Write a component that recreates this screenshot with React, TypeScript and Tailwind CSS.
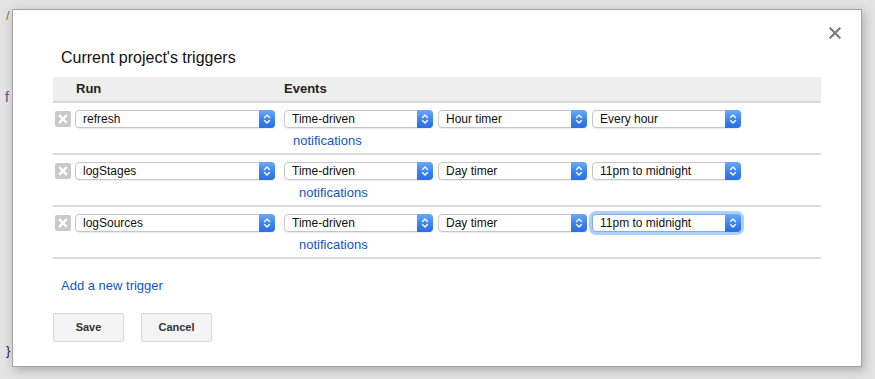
import clsx from 'clsx';

type Trigger = {
  fn: string;
  events: [string, string, string];
  notifyOffset: string;
  focusLast?: boolean;
};

const triggers: Trigger[] = [
  { fn: 'refresh', events: ['Time-driven', 'Hour timer', 'Every hour'], notifyOffset: 'pl-[9px]' },
  { fn: 'logStages', events: ['Time-driven', 'Day timer', '11pm to midnight'], notifyOffset: 'pl-[15px]' },
  { fn: 'logSources', events: ['Time-driven', 'Day timer', '11pm to midnight'], notifyOffset: 'pl-[15px]', focusLast: true },
];

const font = 'font-["Liberation_Sans",Arial,sans-serif]';

const Select = ({ value, className, focused }: { value: string; className: string; focused?: boolean }) => (
  <div
    className={clsx(
      'flex h-[18px] items-stretch rounded-[4px] border bg-white',
      focused
        ? 'border-[#7eaef0] shadow-[0_0_0_3px_rgba(110,165,245,0.55)]'
        : 'border-[#c6c6c6] shadow-[0_1px_0_rgba(0,0,0,0.06)]',
      className,
    )}
  >
    <div className="flex flex-1 items-center truncate pl-[7px] text-[12px] leading-none text-[#111]">{value}</div>
    <div className="-my-px -mr-px flex w-[16px] items-center justify-center rounded-r-[4px] bg-[linear-gradient(180deg,#6aa9fb_0%,#3a82f0_55%,#2a6fe3_100%)]">
      <svg width="8" height="12" viewBox="0 0 8 12" fill="none" stroke="white" strokeWidth="1.4" strokeLinecap="round" strokeLinejoin="round">
        <path d="M1.5 4.5 L4 2 L6.5 4.5" />
        <path d="M1.5 7.5 L4 10 L6.5 7.5" />
      </svg>
    </div>
  </div>
);

const DeleteIcon = () => (
  <div className="mt-px flex h-[16px] w-[16px] items-center justify-center rounded-[2px] bg-[#c9c9c9]">
    <svg width="10" height="10" viewBox="0 0 10 10" stroke="white" strokeWidth="2.4" strokeLinecap="square">
      <path d="M2 2 L8 8 M8 2 L2 8" />
    </svg>
  </div>
);

export default function App() {
  return (
    <div className={clsx('relative h-[379px] w-[875px] overflow-hidden bg-[#e3e3e3]', font)}>
      {/* editor behind the dialog */}
      <div className="absolute left-[6px] top-[6px] text-[13px] text-[#a86a2c]">/</div>
      <div className="absolute left-[5px] top-[87px] text-[14px] text-[#7b3f9e]">f</div>
      <div className="absolute left-[6px] top-[341px] text-[13px] text-[#222]">{'}'}</div>

      <div className="absolute left-[12px] top-[9px] flex h-[358px] w-[850px] flex-col border border-[#a3a3a3] bg-white pl-[40px] pr-[40px] shadow-[2px_3px_10px_rgba(0,0,0,0.25)]">
        <button className="absolute right-[20px] top-[17px] p-0">
          <svg width="12" height="12" viewBox="0 0 12 12" stroke="#7a7a7a" strokeWidth="2.2" strokeLinecap="square">
            <path d="M1.5 1.5 L10.5 10.5 M10.5 1.5 L1.5 10.5" />
          </svg>
        </button>

        <div className="mt-[39px] pl-[8px] text-[16px] leading-[18px] text-[#111]">Current project's triggers</div>

        <div className="mt-[10px] w-[768px]">
          <div className="flex h-[26px] items-center border-b-2 border-[#d9d9d9] bg-[#eeeeee] text-[13px] font-bold text-[#222]">
            <div className="w-[231px] pl-[23px]">Run</div>
            <div>Events</div>
          </div>
          {triggers.map((t) => (
            <div key={t.fn} className="flex h-[52px] items-start border-b-2 border-[#d9d9d9] pl-[2px] pt-[7px]">
              <DeleteIcon />
              <Select value={t.fn} className="ml-[4px] w-[200px]" />
              <div className="ml-[9px] flex flex-col">
                <div className="flex gap-[5px]">
                  <Select value={t.events[0]} className="w-[149px]" />
                  <Select value={t.events[1]} className="w-[149px]" />
                  <Select value={t.events[2]} className="w-[149px]" focused={t.focusLast} />
                </div>
                <a className={clsx('mt-[5px] text-[13px] leading-[15px] text-[#1155cc]', t.notifyOffset)}>notifications</a>
              </div>
            </div>
          ))}
        </div>

        <a className="mt-[19px] pl-[8px] text-[13px] leading-[15px] text-[#1155cc]">Add a new trigger</a>

        <div className="mt-[20px] flex gap-[17px]">
          <button className="h-[29px] w-[71px] rounded-[2px] border border-[#d8d8d8] bg-[#f4f4f4] text-[11px] font-bold text-[#333]">Save</button>
          <button className="h-[29px] w-[71px] rounded-[2px] border border-[#d8d8d8] bg-[#f4f4f4] text-[11px] font-bold text-[#333]">Cancel</button>
        </div>
      </div>
    </div>
  );
}
